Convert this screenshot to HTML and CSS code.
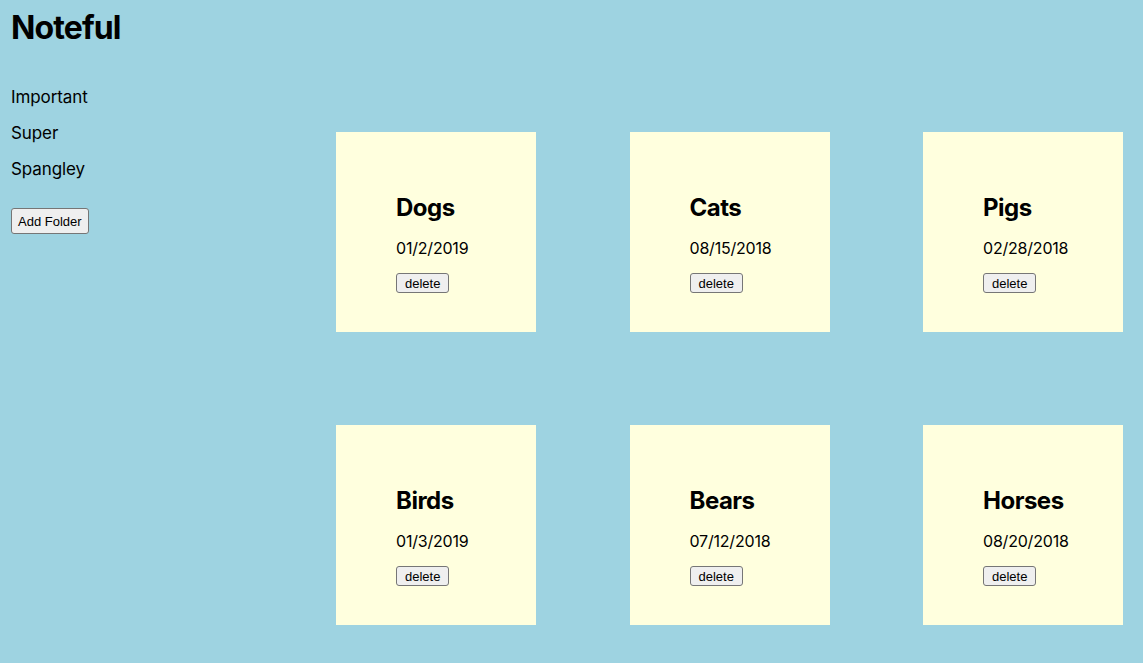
FILE: index.html
```html
<!DOCTYPE html>
<html lang="en">
<head>
<meta charset="utf-8">
<title>Noteful</title>
<link rel="stylesheet" href="styles.css">
</head>
<body>
<div class="app">
  <aside class="sidebar">
    <h1 class="title">Noteful</h1>
    <ul class="folders">
      <li>Important</li>
      <li>Super</li>
      <li>Spangley</li>
    </ul>
    <button class="btn btn-add">Add Folder</button>
  </aside>
  <main class="notes">
    <div class="note"><h2>Dogs</h2><p>01/2/2019</p><button class="btn btn-del">delete</button></div>
    <div class="note"><h2>Cats</h2><p>08/15/2018</p><button class="btn btn-del">delete</button></div>
    <div class="note"><h2>Pigs</h2><p>02/28/2018</p><button class="btn btn-del">delete</button></div>
    <div class="note"><h2>Birds</h2><p>01/3/2019</p><button class="btn btn-del">delete</button></div>
    <div class="note"><h2>Bears</h2><p>07/12/2018</p><button class="btn btn-del">delete</button></div>
    <div class="note"><h2>Horses</h2><p>08/20/2018</p><button class="btn btn-del">delete</button></div>
  </main>
</div>
</body>
</html>
```
FILE: styles.css
```css
html, body {
  margin: 0;
  padding: 0;
  background: #9ed3e1;
  font-family: Inter, "Noto Sans", sans-serif;
  color: #000;
}
.app {
  display: flex;
  align-items: flex-start;
  min-height: 663px;
}
.sidebar {
  width: 325px;
  padding-left: 11px;
  padding-top: 8px;
}
.title {
  margin: 0;
  font-size: 32px;
  font-weight: 700;
  line-height: 39px;
  letter-spacing: -0.9px;
}
.folders {
  list-style: none;
  margin: 40px 0 0 0;
  padding: 0;
}
.folders li {
  font-size: 17px;
  line-height: 21px;
  margin-bottom: 15px;
  letter-spacing: -0.1px;
}
.btn {
  font-family: "Liberation Sans", Arial, sans-serif;
  font-size: 13px;
  color: #000;
  background: #efefef;
  border: 1px solid #767676;
  border-radius: 3px;
  box-sizing: border-box;
}
.btn-add {
  margin-top: 13px;
  height: 26px;
  padding: 0 6px;
}
.notes {
  display: grid;
  grid-template-columns: repeat(3, 200px);
  column-gap: 93.5px;
  row-gap: 93px;
  padding-top: 132px;
}
.note {
  width: 200px;
  height: 200px;
  box-sizing: border-box;
  background: #ffffde;
  padding: 61px 0 0 60px;
}
.note h2 {
  margin: 0;
  font-size: 24px;
  font-weight: 700;
  line-height: 29px;
  letter-spacing: -0.5px;
}
.note p {
  margin: 17px 0 0 0;
  font-size: 16px;
  line-height: 19px;
  letter-spacing: -0.2px;
}
.btn-del {
  margin-top: 15px;
  height: 20px;
  padding: 0 8px;
  display: block;
}
```
